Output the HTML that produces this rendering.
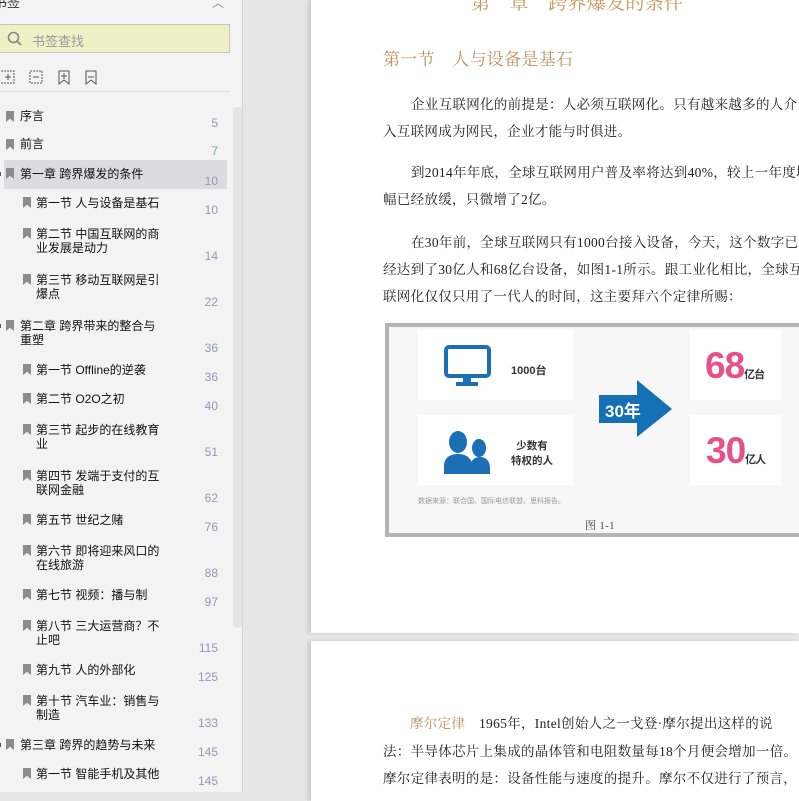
<!DOCTYPE html>
<html><head><meta charset="utf-8"><style>
*{margin:0;padding:0;box-sizing:border-box}
body{width:799px;height:792px;overflow:hidden;background:#e6e6e6;position:relative;font-family:"Liberation Sans","Noto Sans CJK SC",sans-serif}
.sb{position:absolute;left:0;top:0;width:243px;height:792px;background:#f3f3f3;border-right:1px solid #d4d4d4}
.a{position:absolute;white-space:nowrap}
.it{position:absolute;font-size:12px;color:#111;line-height:14px;white-space:nowrap}
.pn{position:absolute;right:24px;font-size:12px;color:#8e9bb5;width:40px;text-align:right}
.bm{position:absolute;width:8px;height:11px;background:#8c8c8c;clip-path:polygon(0 0,100% 0,100% 100%,50% 70%,0 100%)}
.page{position:absolute;left:311px;width:488px;background:#fff;overflow:hidden;box-shadow:-3px 0 4px rgba(0,0,0,.12)}
.t{position:absolute;white-space:nowrap;font-family:"Liberation Serif","Noto Serif CJK SC",serif;font-size:13.5px;color:#222;letter-spacing:0.3px}
</style></head><body>
<div class="sb">
 <div class="a" style="left:-6px;top:-8px;font-size:13px;color:#333">书签</div>
 <div class="a" style="left:212px;top:-6px;font-size:12px;color:#888">︿</div>
 <div class="a" style="left:-2px;top:24px;width:232px;height:29px;background:#f0f0c6;border:1px solid #c8c8b8"></div>
 <svg class="a" style="left:7px;top:31px" width="16" height="16"><circle cx="6.5" cy="6.5" r="5" stroke="#888" stroke-width="1.6" fill="none"/><line x1="10" y1="10" x2="14" y2="14" stroke="#888" stroke-width="1.8"/></svg>
 <div class="a" style="left:32px;top:31px;font-size:13px;color:#999">书签查找</div>
 <svg class="a" style="left:0;top:68px" width="110" height="18" fill="none" stroke="#555" stroke-width="1">
  <rect x="-2" y="3" width="16" height="12" stroke-dasharray="2 1"/><line x1="5" y1="9" x2="11" y2="9"/><line x1="8" y1="6" x2="8" y2="12"/>
  <rect x="30" y="3" width="12" height="12" stroke-dasharray="2 1"/><line x1="33" y1="9" x2="39" y2="9"/>
  <path d="M59 3h10v13l-5-4-5 4z"/><line x1="61" y1="8" x2="67" y2="8"/><line x1="64" y1="5" x2="64" y2="11"/>
  <path d="M86 3h10v13l-5-4-5 4z"/><line x1="88" y1="9" x2="94" y2="9"/>
 </svg>
 <div class="a" style="left:0;top:91px;width:230px;border-top:1px solid #ddd"></div>
 <div class="a" style="left:233px;top:107px;width:9px;height:521px;background:#e4e4e4;border-radius:4px"></div>
 <div class="a" style="left:4px;top:160px;width:223px;height:29px;background:#dcdcdf"></div>
 <div class="a" style="left:-2px;top:172px;width:3px;height:4px;background:#555"></div>
 <div class="a" style="left:-2px;top:324px;width:3px;height:4px;background:#555"></div>
 <div class="a" style="left:-2px;top:743px;width:3px;height:4px;background:#555"></div>

 <div class="bm" style="left:6px;top:111px"></div><div class="it" style="left:20px;top:109px">序言</div><div class="pn" style="top:116px">5</div>
 <div class="bm" style="left:6px;top:139px"></div><div class="it" style="left:20px;top:137px">前言</div><div class="pn" style="top:144px">7</div>
 <div class="bm" style="left:6px;top:168px"></div><div class="it" style="left:20px;top:167px">第一章 跨界爆发的条件</div><div class="pn" style="top:174px">10</div>
 <div class="bm" style="left:23px;top:197px"></div><div class="it" style="left:36px;top:196px">第一节 人与设备是基石</div><div class="pn" style="top:203px">10</div>
 <div class="bm" style="left:23px;top:228px"></div><div class="it" style="left:36px;top:227px">第二节 中国互联网的商<br>业发展是动力</div><div class="pn" style="top:249px">14</div>
 <div class="bm" style="left:23px;top:274px"></div><div class="it" style="left:36px;top:273px">第三节 移动互联网是引<br>爆点</div><div class="pn" style="top:295px">22</div>
 <div class="bm" style="left:6px;top:320px"></div><div class="it" style="left:20px;top:319px">第二章 跨界带来的整合与<br>重塑</div><div class="pn" style="top:341px">36</div>
 <div class="bm" style="left:23px;top:364px"></div><div class="it" style="left:36px;top:363px">第一节 Offline的逆袭</div><div class="pn" style="top:370px">36</div>
 <div class="bm" style="left:23px;top:393px"></div><div class="it" style="left:36px;top:392px">第二节 O2O之初</div><div class="pn" style="top:399px">40</div>
 <div class="bm" style="left:23px;top:424px"></div><div class="it" style="left:36px;top:423px">第三节 起步的在线教育<br>业</div><div class="pn" style="top:445px">51</div>
 <div class="bm" style="left:23px;top:470px"></div><div class="it" style="left:36px;top:469px">第四节 发端于支付的互<br>联网金融</div><div class="pn" style="top:491px">62</div>
 <div class="bm" style="left:23px;top:514px"></div><div class="it" style="left:36px;top:513px">第五节 世纪之赌</div><div class="pn" style="top:520px">76</div>
 <div class="bm" style="left:23px;top:545px"></div><div class="it" style="left:36px;top:544px">第六节 即将迎来风口的<br>在线旅游</div><div class="pn" style="top:566px">88</div>
 <div class="bm" style="left:23px;top:589px"></div><div class="it" style="left:36px;top:588px">第七节 视频：播与制</div><div class="pn" style="top:595px">97</div>
 <div class="bm" style="left:23px;top:620px"></div><div class="it" style="left:36px;top:619px">第八节 三大运营商？不<br>止吧</div><div class="pn" style="top:641px">115</div>
 <div class="bm" style="left:23px;top:664px"></div><div class="it" style="left:36px;top:663px">第九节 人的外部化</div><div class="pn" style="top:670px">125</div>
 <div class="bm" style="left:23px;top:695px"></div><div class="it" style="left:36px;top:694px">第十节 汽车业：销售与<br>制造</div><div class="pn" style="top:716px">133</div>
 <div class="bm" style="left:6px;top:739px"></div><div class="it" style="left:20px;top:738px">第三章 跨界的趋势与未来</div><div class="pn" style="top:745px">145</div>
 <div class="bm" style="left:23px;top:768px"></div><div class="it" style="left:36px;top:767px">第一节 智能手机及其他</div><div class="pn" style="top:774px">145</div>
</div>

<div class="page" style="top:0;height:633px">
 <div class="t" style="left:160px;top:-12px;font-size:19px;color:#c8955a">第　章　跨界爆发的条件</div>
 <div class="t" style="left:72px;top:45px;font-size:17px;color:#c09060">第一节　人与设备是基石</div>
 <div class="t" style="left:100px;top:93px">企业互联网化的前提是：人必须互联网化。只有越来越多的人介</div>
 <div class="t" style="left:72px;top:120px">入互联网成为网民，企业才能与时俱进。</div>
 <div class="t" style="left:100px;top:161px">到2014年年底，全球互联网用户普及率将达到40%，较上一年度增</div>
 <div class="t" style="left:72px;top:188px">幅已经放缓，只微增了2亿。</div>
 <div class="t" style="left:100px;top:231px">在30年前，全球互联网只有1000台接入设备，今天，这个数字已</div>
 <div class="t" style="left:72px;top:258px">经达到了30亿人和68亿台设备，如图1-1所示。跟工业化相比，全球互</div>
 <div class="t" style="left:72px;top:285px">联网化仅仅只用了一代人的时间，这主要拜六个定律所赐：</div>

 <div class="a" style="left:74px;top:323px;width:420px;height:214px;background:#f7f7f7;border:4px solid #b4b4b4;border-right:none">
  <div class="a" style="left:29px;top:3px;width:155px;height:70px;background:#fff"></div>
  <div class="a" style="left:29px;top:88px;width:155px;height:70px;background:#fff"></div>
  <div class="a" style="left:301px;top:3px;width:91px;height:70px;background:#fff"></div>
  <div class="a" style="left:301px;top:88px;width:91px;height:70px;background:#fff"></div>
  <svg class="a" style="left:55px;top:18px" width="50" height="46"><rect x="2" y="2" width="43" height="29" rx="3" fill="#fff" stroke="#1a6fb5" stroke-width="4"/><rect x="19" y="32" width="8" height="6" fill="#1a6fb5"/><rect x="12" y="37" width="22" height="4" fill="#1a6fb5"/></svg>
  <div class="a" style="left:122px;top:35px;font-size:11px;font-weight:bold;color:#333">1000台</div>
  <svg class="a" style="left:55px;top:103px" width="52" height="44" fill="#1a6fb5"><ellipse cx="14" cy="12" rx="9" ry="11"/><path d="M0 44v-8c0-8 6-12 14-12s14 4 14 12v8z"/><ellipse cx="35" cy="18" rx="7" ry="9"/><path d="M26 44v-6c0-7 4-11 10-11s10 4 10 11v6z"/></svg>
  <div class="a" style="left:122px;top:112px;font-size:10.5px;font-weight:bold;color:#333;line-height:15px;text-align:center">少数有<br>特权的人</div>
  <svg class="a" style="left:210px;top:53px" width="75" height="58"><rect x="0" y="15" width="40" height="28" fill="#1570b5"/><polygon points="38,0 73,29 38,57" fill="#1570b5"/><text x="6" y="37" font-family="Liberation Sans,Noto Sans CJK SC,sans-serif" font-size="17" font-weight="bold" fill="#fff">30年</text></svg>
  <div class="a" style="left:316px;top:18px;font-size:37px;font-weight:bold;color:#e8508a;letter-spacing:-1px">68<span style="font-size:11px;color:#333">亿台</span></div>
  <div class="a" style="left:317px;top:103px;font-size:37px;font-weight:bold;color:#e8508a;letter-spacing:-1px">30<span style="font-size:11px;color:#333">亿人</span></div>
  <div class="a" style="left:29px;top:169px;font-size:7px;color:#999">数据来源：联合国、国际电信联盟、思科报告。</div>
  <div class="t" style="left:196px;top:190px;font-size:11px;color:#444">图 1-1</div>
 </div>
</div>

<div class="page" style="top:641px;height:160px">
 <div class="t" style="left:99px;top:71px"><span style="color:#c09060">摩尔定律</span>　1965年，Intel创始人之一戈登·摩尔提出这样的说</div>
 <div class="t" style="left:72px;top:99px">法：半导体芯片上集成的晶体管和电阻数量每18个月便会增加一倍。</div>
 <div class="t" style="left:72px;top:126px">摩尔定律表明的是：设备性能与速度的提升。摩尔不仅进行了预言，</div>
</div>
</body></html>
